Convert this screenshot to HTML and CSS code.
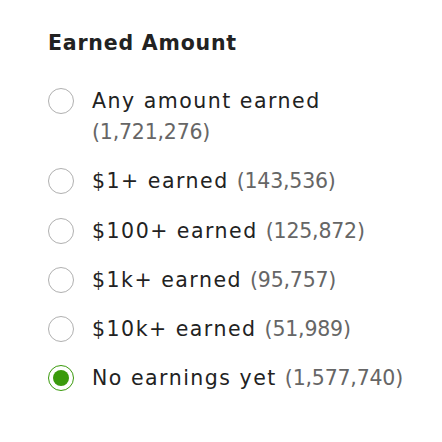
FILE: index.html
```html
<!DOCTYPE html>
<html>
<head>
<meta charset="utf-8">
<link rel="stylesheet" href="styles.css">
</head>
<body>
<section class="filter">
  <h3 class="title">Earned Amount</h3>
  <ul class="options">
    <li class="option"><span class="radio"></span><span class="label">Any amount earned <span class="count">(1,721,276)</span></span></li>
    <li class="option"><span class="radio"></span><span class="label">$1+ earned <span class="count">(143,536)</span></span></li>
    <li class="option"><span class="radio"></span><span class="label">$100+ earned <span class="count">(125,872)</span></span></li>
    <li class="option"><span class="radio"></span><span class="label">$1k+ earned <span class="count">(95,757)</span></span></li>
    <li class="option"><span class="radio"></span><span class="label">$10k+ earned <span class="count">(51,989)</span></span></li>
    <li class="option selected"><span class="radio"></span><span class="label">No earnings yet <span class="count">(1,577,740)</span></span></li>
  </ul>
</section>
</body>
</html>
```
FILE: styles.css
```css
html, body {
  margin: 0;
  padding: 0;
  background: #fff;
}
body {
  font-family: "DejaVu Sans", "Noto Sans", sans-serif;
  color: #222;
}
.filter {
  padding: 28px 0 0 48px;
  width: 380px;
}
.title {
  margin: 0 0 28px;
  font-size: 20.5px;
  line-height: 30px;
  font-weight: bold;
  letter-spacing: 0.8px;
  color: #222;
}
.options {
  list-style: none;
  margin: 0;
  padding: 0;
  display: flex;
  flex-direction: column;
  gap: 18.3px;
}
.option {
  display: flex;
  align-items: flex-start;
  gap: 18px;
}
.radio {
  flex: none;
  width: 26px;
  height: 26px;
  margin-top: 2px;
  border: 1px solid #b0b0b0;
  border-radius: 50%;
  box-sizing: border-box;
  display: flex;
  align-items: center;
  justify-content: center;
}
.selected .radio {
  border-color: #3a9a0c;
}
.selected .radio::after {
  content: "";
  width: 16px;
  height: 16px;
  border-radius: 50%;
  background: #3a9a0c;
}
.label {
  font-size: 20.5px;
  line-height: 31px;
  letter-spacing: 1.5px;
  width: 330px;
}
.count {
  color: #666;
  letter-spacing: -0.2px;
}
```
